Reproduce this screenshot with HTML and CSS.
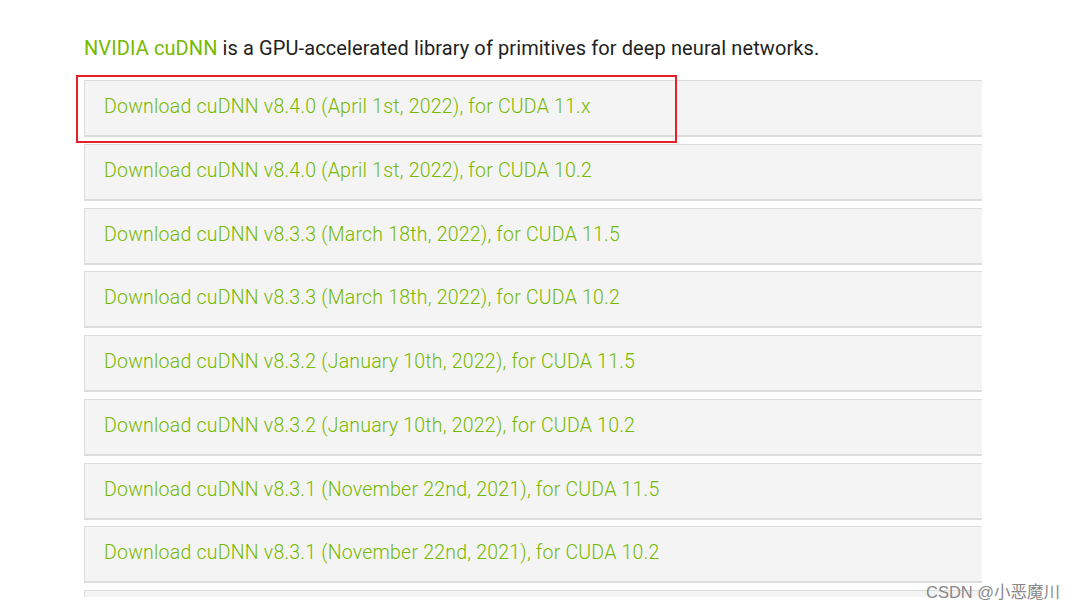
FILE: index.html
```html
<!DOCTYPE html>
<html>
<head>
<meta charset="utf-8">
<link rel="stylesheet" href="styles.css">
</head>
<body>
<div class="page">
  <p class="intro"><a class="link" href="#">NVIDIA cuDNN</a> is a GPU-accelerated library of primitives for deep neural networks.</p>
  <div class="list">
    <div class="row highlighted"><a href="#">Download cuDNN v8.4.0 (April 1st, 2022), for CUDA 11.x</a></div>
    <div class="row"><a href="#">Download cuDNN v8.4.0 (April 1st, 2022), for CUDA 10.2</a></div>
    <div class="row"><a href="#">Download cuDNN v8.3.3 (March 18th, 2022), for CUDA 11.5</a></div>
    <div class="row"><a href="#">Download cuDNN v8.3.3 (March 18th, 2022), for CUDA 10.2</a></div>
    <div class="row"><a href="#">Download cuDNN v8.3.2 (January 10th, 2022), for CUDA 11.5</a></div>
    <div class="row"><a href="#">Download cuDNN v8.3.2 (January 10th, 2022), for CUDA 10.2</a></div>
    <div class="row"><a href="#">Download cuDNN v8.3.1 (November 22nd, 2021), for CUDA 11.5</a></div>
    <div class="row"><a href="#">Download cuDNN v8.3.1 (November 22nd, 2021), for CUDA 10.2</a></div>
    <div class="row"></div>
  </div>
  <div class="watermark">CSDN @小恶魔川</div>
</div>
</body>
</html>
```
FILE: styles.css
```css
html, body {
  margin: 0;
  padding: 0;
  background: #fff;
}
.page {
  position: relative;
  width: 1075px;
  height: 608px;
  overflow: hidden;
  font-family: Roboto, "Noto Sans", sans-serif;
}
.intro {
  margin: 0;
  padding: 36px 0 0 84px;
  font-size: 20px;
  letter-spacing: 0.1px;
  line-height: 24px;
  color: #222;
}
.intro .link {
  color: #76b900;
  text-decoration: none;
}
.list {
  margin-left: 84px;
  margin-top: 20px;
  width: 898px;
  height: 517px;
  clip-path: inset(-12px 0 0 -12px);
  display: flex;
  flex-direction: column;
  gap: 6.75px;
}
.row {
  flex: none;
  position: relative;
  width: 1000px;
  height: 51px;
  box-sizing: content-box;
  background: #f4f4f4;
  border: 1px solid #dcdcdc;
  border-bottom: 2px solid #dcdcdc;
  display: flex;
  align-items: center;
  padding-left: 19px;
  padding-bottom: 3px;
}
.row a {
  color: #76b900;
  text-decoration: none;
  font-size: 19.5px;
  font-weight: 300;
  letter-spacing: 0.22px;
}
.highlighted::after {
  content: "";
  position: absolute;
  left: -9px;
  top: -6px;
  width: 597px;
  height: 64px;
  border: 2px solid #e5202a;
  pointer-events: none;
}
.watermark {
  position: absolute;
  left: 926px;
  top: 579px;
  font-family: "Liberation Sans", "Noto Sans CJK SC", sans-serif;
  font-size: 16.5px;
  color: #888;
}
```
